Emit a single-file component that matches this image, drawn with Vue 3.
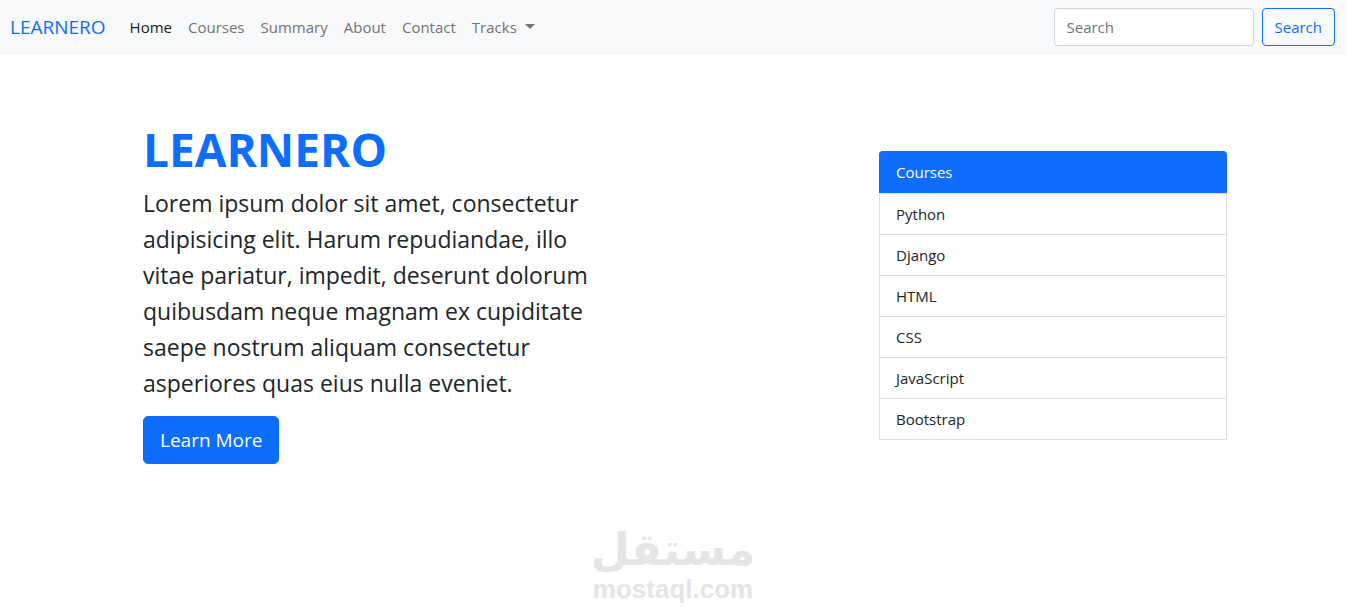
<template>
  <div class="page">
    <nav class="navbar">
      <a class="brand" href="#">LEARNERO</a>
      <ul class="nav-links">
        <li v-for="link in links" :key="link">
          <a
            href="#"
            class="nav-link"
            :class="{ active: link === activeLink }"
            @click.prevent="activeLink = link"
          >{{ link }}</a>
        </li>
        <li>
          <a href="#" class="nav-link dropdown" @click.prevent>Tracks</a>
        </li>
      </ul>
      <form class="search" @submit.prevent>
        <input
          v-model="query"
          class="search-input"
          type="search"
          placeholder="Search"
          aria-label="Search"
        >
        <button class="search-button" type="submit">Search</button>
      </form>
    </nav>

    <main class="hero">
      <section class="intro">
        <h1>LEARNERO</h1>
        <p>
          Lorem ipsum dolor sit amet, consectetur adipisicing elit. Harum repudiandae, illo vitae
          pariatur, impedit, deserunt dolorum quibusdam neque magnam ex cupiditate saepe nostrum
          aliquam consectetur asperiores quas eius nulla eveniet.
        </p>
        <button class="learn-more" type="button">Learn More</button>
      </section>
      <ul class="course-list">
        <li class="course-item heading">Courses</li>
        <li v-for="course in courses" :key="course" class="course-item">{{ course }}</li>
      </ul>
    </main>

    <footer class="footer">
      <span class="mark-arabic" lang="ar" dir="rtl">مستقل</span>
      <span class="mark-latin">mostaql.com</span>
    </footer>
  </div>
</template>

<script setup>
import { ref } from 'vue'

const links = ['Home', 'Courses', 'Summary', 'About', 'Contact']
const courses = ['Python', 'Django', 'HTML', 'CSS', 'JavaScript', 'Bootstrap']

const activeLink = ref('Home')
const query = ref('')
</script>

<style>
body {
  margin: 0;
  background-color: #fff;
}
</style>

<style scoped>
.page {
  color: #212529;
  font-family: "Segoe UI", "Open Sans", "Noto Sans", sans-serif;
  font-size: 15px;
  line-height: 24px;
}

a {
  text-decoration: none;
}

ul {
  list-style: none;
  margin: 0;
  padding: 0;
}

input,
button {
  box-sizing: border-box;
  font-family: inherit;
  font-size: inherit;
  line-height: inherit;
}

button {
  cursor: pointer;
}

.navbar {
  display: flex;
  align-items: center;
  padding: 8px 11px 9px 10px;
  background-color: #f8f9fa;
}

.brand {
  margin-right: 16px;
  color: #0d6efd;
  font-size: 19px;
}

.nav-links {
  display: flex;
  flex: 1;
}

.nav-link {
  display: block;
  padding: 0 8px;
  color: #737475;
}

.nav-link.active {
  color: #191919;
}

.dropdown::after {
  content: "";
  display: inline-block;
  margin-left: 8px;
  vertical-align: 4px;
  border-top: 5px solid;
  border-right: 5px solid transparent;
  border-left: 5px solid transparent;
}

.search {
  display: flex;
  gap: 8px;
}

.search-input {
  width: 200px;
  padding: 6px 12px;
  border: 1px solid #ced4da;
  border-radius: 4px;
  background-color: #fff;
  color: #212529;
  appearance: none;
}

.search-input::placeholder {
  color: #6c757d;
}

.search-button {
  padding: 6px 12px;
  border: 1px solid #0d6efd;
  border-radius: 4px;
  background-color: transparent;
  color: #0d6efd;
}

.hero {
  display: flex;
  align-items: flex-start;
  justify-content: space-between;
  padding: 62px 119px 0 143px;
}

.intro {
  width: 456px;
}

h1 {
  margin: 0 0 4px;
  color: #0d6efd;
  font-size: 46px;
  font-weight: 700;
  line-height: 64px;
}

.intro p {
  margin: 0 0 15px;
  font-size: 23px;
  line-height: 36px;
}

.learn-more {
  padding: 8px 16px;
  border: 1px solid #0d6efd;
  border-radius: 5px;
  background-color: #0d6efd;
  color: #fff;
  font-size: 19px;
  line-height: 30px;
}

.course-list {
  width: 346px;
  margin-top: 34px;
  border: 1px solid #dfdfdf;
  border-top: 0;
  border-radius: 4px 4px 0 0;
}

.course-item {
  padding: 8px 16px;
  border-top: 1px solid #dfdfdf;
}

.course-item.heading {
  margin: 0 -1px;
  padding: 8px 17px;
  border-bottom: 1px solid;
  border-color: #0d6efd;
  border-radius: 4px 4px 0 0;
  background-color: #0d6efd;
  color: #fff;
}

.footer {
  display: flex;
  flex-direction: column;
  align-items: center;
  padding: 60px 0 8px;
  color: #e5e5e5;
  font-weight: 700;
}

.mark-arabic {
  font-family: "DejaVu Sans", sans-serif;
  font-size: 45px;
  line-height: 52px;
}

.mark-latin {
  font-family: "Liberation Sans", Arial, sans-serif;
  font-size: 26px;
  line-height: 26px;
}
</style>
